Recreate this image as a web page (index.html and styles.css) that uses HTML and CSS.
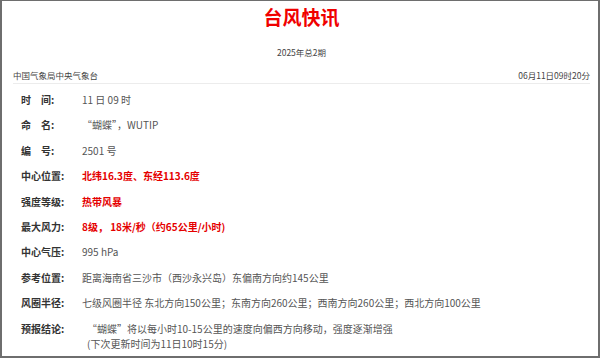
FILE: index.html
```html
<!DOCTYPE html>
<html lang="zh-CN">
<head>
<meta charset="utf-8">
<title>台风快讯</title>
<link rel="stylesheet" href="styles.css">
</head>
<body>
<div class="page">
  <h1 class="title">台风快讯</h1>
  <div class="issue">2025年总2期</div>
  <div class="meta">
    <span>中国气象局中央气象台</span>
    <span>06月11日09时20分</span>
  </div>
  <div class="rows">
    <div class="row"><div class="label">时　间:</div><div class="value">11 日 09 时</div></div>
    <div class="row"><div class="label">命　名:</div><div class="value">“蝴蝶”，WUTIP</div></div>
    <div class="row"><div class="label">编　号:</div><div class="value">2501 号</div></div>
    <div class="row"><div class="label">中心位置:</div><div class="value red">北纬16.3度、东经113.6度</div></div>
    <div class="row"><div class="label">强度等级:</div><div class="value red">热带风暴</div></div>
    <div class="row"><div class="label">最大风力:</div><div class="value red">8级， 18米/秒（约65公里/小时)</div></div>
    <div class="row"><div class="label">中心气压:</div><div class="value">995 hPa</div></div>
    <div class="row"><div class="label">参考位置:</div><div class="value">距离海南省三沙市（西沙永兴岛）东偏南方向约145公里</div></div>
    <div class="row"><div class="label">风圈半径:</div><div class="value">七级风圈半径 东北方向150公里；东南方向260公里；西南方向260公里；西北方向100公里</div></div>
    <div class="row"><div class="label">预报结论:</div><div class="value indent">“蝴蝶”将以每小时10-15公里的速度向偏西方向移动，强度逐渐增强<br>(下次更新时间为11日10时15分)</div></div>
  </div>
</div>
</body>
</html>
```
FILE: styles.css
```css
html, body {
  margin: 0;
  padding: 0;
  background: #fff;
}
body {
  font-family: "Noto Sans CJK SC", "Microsoft YaHei", sans-serif;
  color: #444;
}
.page {
  box-sizing: border-box;
  width: 600px;
  height: 358px;
  border: 2px solid #6e6e6e;
  border-top-width: 1px;
  padding: 4px 8px 0 11px;
  overflow: hidden;
}
.title {
  margin: 0;
  text-align: center;
  font-size: 19px;
  line-height: 24px;
  font-weight: bold;
  color: #f00000;
}
.issue {
  margin-top: 17px;
  text-align: center;
  font-size: 8.5px;
  line-height: 12px;
  color: #444;
}
.meta {
  margin-top: 11px;
  display: flex;
  justify-content: space-between;
  font-size: 8.5px;
  line-height: 12px;
  color: #444;
  padding-bottom: 2px;
  border-bottom: 1px solid #ececec;
}
.rows {
  display: flex;
  flex-direction: column;
  gap: 10.4px;
  padding: 8px 0 0 8px;
}
.row {
  display: flex;
  font-size: 10px;
  line-height: 15px;
}
.label {
  width: 61px;
  flex: none;
  font-weight: bold;
  color: #333;
}
.value {
  color: #555;
}
.red {
  color: #e50000;
  font-weight: bold;
}
.indent {
  padding-left: 5px;
}
```
